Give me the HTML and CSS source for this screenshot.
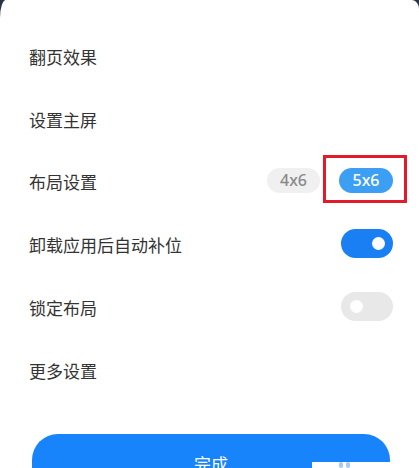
FILE: index.html
```html
<!DOCTYPE html>
<html lang="zh">
<head>
<meta charset="utf-8">
<link rel="stylesheet" href="styles.css">
</head>
<body>
<div class="sheet">
  <div class="list">
    <div class="row"><span class="label">翻页效果</span></div>
    <div class="row"><span class="label">设置主屏</span></div>
    <div class="row">
      <span class="label">布局设置</span>
      <div class="chips">
        <span class="chip">4x6</span>
        <span class="mark"><span class="chip chip-on">5x6</span></span>
      </div>
    </div>
    <div class="row">
      <span class="label">卸载应用后自动补位</span>
      <span class="toggle toggle-on"><span class="knob"></span></span>
    </div>
    <div class="row">
      <span class="label">锁定布局</span>
      <span class="toggle"><span class="knob"></span></span>
    </div>
    <div class="row"><span class="label">更多设置</span></div>
  </div>
  <div class="btn-wrap">
    <button class="done">完成</button>
  </div>
  <div class="watermark"><span class="dot"></span><span class="dot"></span></div>
</div>
</body>
</html>
```

FILE: styles.css
```css
html, body {
  margin: 0;
  padding: 0;
  background: #2b3447;
  width: 419px;
  height: 468px;
  overflow: hidden;
}
.sheet {
  position: relative;
  width: 419px;
  height: 468px;
  background: #ffffff;
  border-top-left-radius: 6px 18px;
  border-top-right-radius: 7px 9px;
  font-family: "Noto Sans CJK SC", "Noto Sans", sans-serif;
  overflow: hidden;
}
.list {
  padding-top: 25px;
}
.row {
  height: 62.8px;
  display: flex;
  align-items: center;
  justify-content: space-between;
  padding: 0 26px 0 29px;
}
.label {
  font-size: 17px;
  color: #333333;
  line-height: 1;
}
.chips {
  display: flex;
  align-items: center;
  gap: 19px;
  margin-top: -3px;
}
.chip {
  display: flex;
  align-items: center;
  justify-content: center;
  width: 53px;
  height: 25px;
  border-radius: 13px;
  background: #f0f0f0;
  color: #8a8a8a;
  font-family: "Noto Sans", sans-serif;
  font-size: 16px;
  font-weight: 500;
}
.chip-on {
  background: #3d9ff4;
  color: #ffffff;
  width: 54px;
}
.mark {
  position: relative;
  display: flex;
}
.mark::after {
  content: "";
  position: absolute;
  left: -16px;
  top: -13px;
  width: 78px;
  height: 42px;
  border: 3px solid #e11b2a;
}
.toggle {
  position: relative;
  display: block;
  width: 52px;
  height: 29px;
  border-radius: 15px;
  background: #e8e8e8;
  margin-top: -3px;
}
.toggle-on {
  background: #1a7ff2;
}
.knob {
  position: absolute;
  top: 8px;
  left: 9px;
  width: 13px;
  height: 13px;
  border-radius: 50%;
  background: #ffffff;
}
.toggle-on .knob {
  left: 31px;
}
.btn-wrap {
  padding: 32px 29px 0 32px;
}
.done {
  display: block;
  width: 358px;
  height: 60px;
  border: none;
  border-radius: 26px;
  background: #1784fb;
  color: #ffffff;
  font-family: "Noto Sans CJK SC", sans-serif;
  font-size: 17px;
  padding: 0;
}
.watermark {
  position: absolute;
  left: 312px;
  top: 462px;
  width: 78px;
  height: 8px;
  background: #ffffff;
  display: flex;
  gap: 3px;
  padding-left: 27px;
  box-sizing: border-box;
}
.dot {
  width: 4px;
  height: 6px;
  border-radius: 2px;
  background: #a9c9ef;
}
```
